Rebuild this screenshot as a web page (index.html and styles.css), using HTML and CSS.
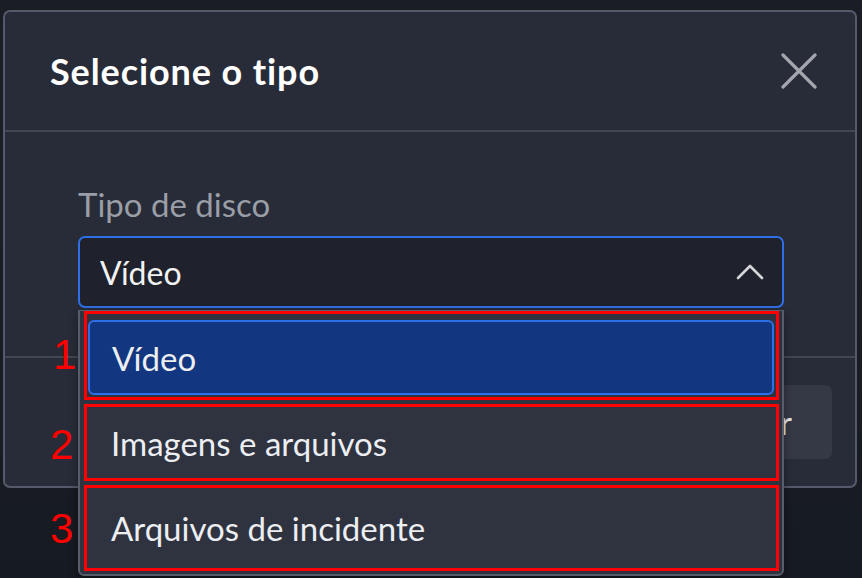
FILE: index.html
```html
<!DOCTYPE html>
<html lang="pt">
<head>
<meta charset="utf-8">
<title>Selecione o tipo</title>
<link rel="stylesheet" href="styles.css">
</head>
<body>
<div class="page">
  <div class="modal">
    <div class="modal-header">
      <h2 class="modal-title">Selecione o tipo</h2>
      <button class="close" aria-label="Fechar">
        <svg width="36" height="36" viewBox="0 0 36 36"><path d="M2 2 L34 34 M34 2 L2 34" stroke="#a3a6ad" stroke-width="3.2" fill="none" stroke-linecap="round"/></svg>
      </button>
    </div>
    <div class="modal-body">
      <div class="label">Tipo de disco</div>
      <div class="select">
        <span class="select-value">Vídeo</span>
        <svg class="chev" width="28" height="18" viewBox="0 0 28 18"><path d="M2 15 L14 3 L26 15" stroke="#d6d7da" stroke-width="2.6" fill="none" stroke-linecap="round" stroke-linejoin="round"/></svg>
      </div>
    </div>
    <div class="modal-footer">
      <button class="btn">Confirmar</button>
    </div>
  </div>

  <div class="dropdown">
    <div class="callout c1"><div class="option active">Vídeo</div></div>
    <div class="callout c2"><div class="option">Imagens e arquivos</div></div>
    <div class="callout c3"><div class="option">Arquivos de incidente</div></div>
  </div>
  <span class="num n1">1</span>
  <span class="num n2">2</span>
  <span class="num n3">3</span>
</div>
</body>
</html>
```

FILE: styles.css
```css
* { box-sizing: border-box; }
html, body { margin: 0; padding: 0; }
body {
  background: linear-gradient(#1a1d24 0, #1a1d24 40%, #161a21 100%);
  width: 862px;
  height: 578px;
  overflow: hidden;
  font-family: Lato, "Open Sans", sans-serif;
}
.page {
  position: relative;
  width: 862px;
  height: 578px;
  padding: 10px 5px 0 3px;
}
.modal {
  width: 854px;
  height: 478px;
  background: #282c38;
  border: 2px solid #555a6a;
  border-radius: 7px;
  display: flex;
  flex-direction: column;
}
.modal-header {
  height: 120px;
  border-bottom: 2px solid #434753;
  display: flex;
  align-items: center;
  justify-content: space-between;
  padding: 0 38px 0 45px;
}
.modal-title {
  margin: 0;
  font-size: 36px;
  font-weight: 700;
  color: #ffffff;
  letter-spacing: 0.9px;
}
.close {
  background: none;
  border: 0;
  padding: 0;
  width: 36px;
  height: 36px;
  display: flex;
}
.modal-body {
  padding: 52px 71px 48px 73px;
  display: flex;
  flex-direction: column;
  gap: 12px;
}
.label {
  font-size: 33px;
  line-height: 40px;
  color: #9a9ea6;
}
.select {
  height: 72px;
  background: #1f222c;
  border: 2px solid #2f6fe6;
  border-radius: 7px;
  display: flex;
  align-items: center;
  justify-content: space-between;
  padding: 0 18px 0 20px;
}
.select-value {
  font-size: 32px;
  color: #f2f2f2;
}
.modal-footer {
  flex: 1;
  border-top: 2px solid #434753;
  display: flex;
  justify-content: flex-end;
  align-items: center;
  padding: 0 23px;
}
.btn {
  height: 74px;
  background: #353946;
  border: 0;
  border-radius: 7px;
  color: #e6e6e6;
  font-family: Lato, sans-serif;
  font-size: 32px;
  padding: 0 40px;
}
.dropdown {
  position: absolute;
  left: 78px;
  top: 310px;
  width: 706px;
  height: 266px;
  background: #2f3340;
  border: 2px solid #585d6c;
  border-top-width: 1px;
  border-radius: 0 0 6px 6px;
  padding: 0 3px 0 4px;
  display: flex;
  flex-direction: column;
  gap: 4px;
  box-shadow: 0 4px 10px rgba(0,0,0,0.35);
}
.callout {
  border: 3px solid #ff0000;
  display: flex;
}
.c1 { height: 89px; padding: 6px 2px 2px 1px; }
.c2 { height: 77px; }
.c3 { height: 86px; }
.option {
  flex: 1;
  display: flex;
  align-items: center;
  padding-left: 24px;
  font-size: 33px;
  color: #eceef2;
}
.option.active {
  background: #12367f;
  border: 2px solid #2d6fe8;
  border-radius: 6px;
  padding-left: 22px;
}
.num {
  position: absolute;
  color: #ff0000;
  font-family: "Liberation Sans", Arial, sans-serif;
  font-size: 42px;
  line-height: 1;
}
.n1 { left: 53px; top: 334px; }
.n2 { left: 50px; top: 424px; }
.n3 { left: 50px; top: 508px; }
```
